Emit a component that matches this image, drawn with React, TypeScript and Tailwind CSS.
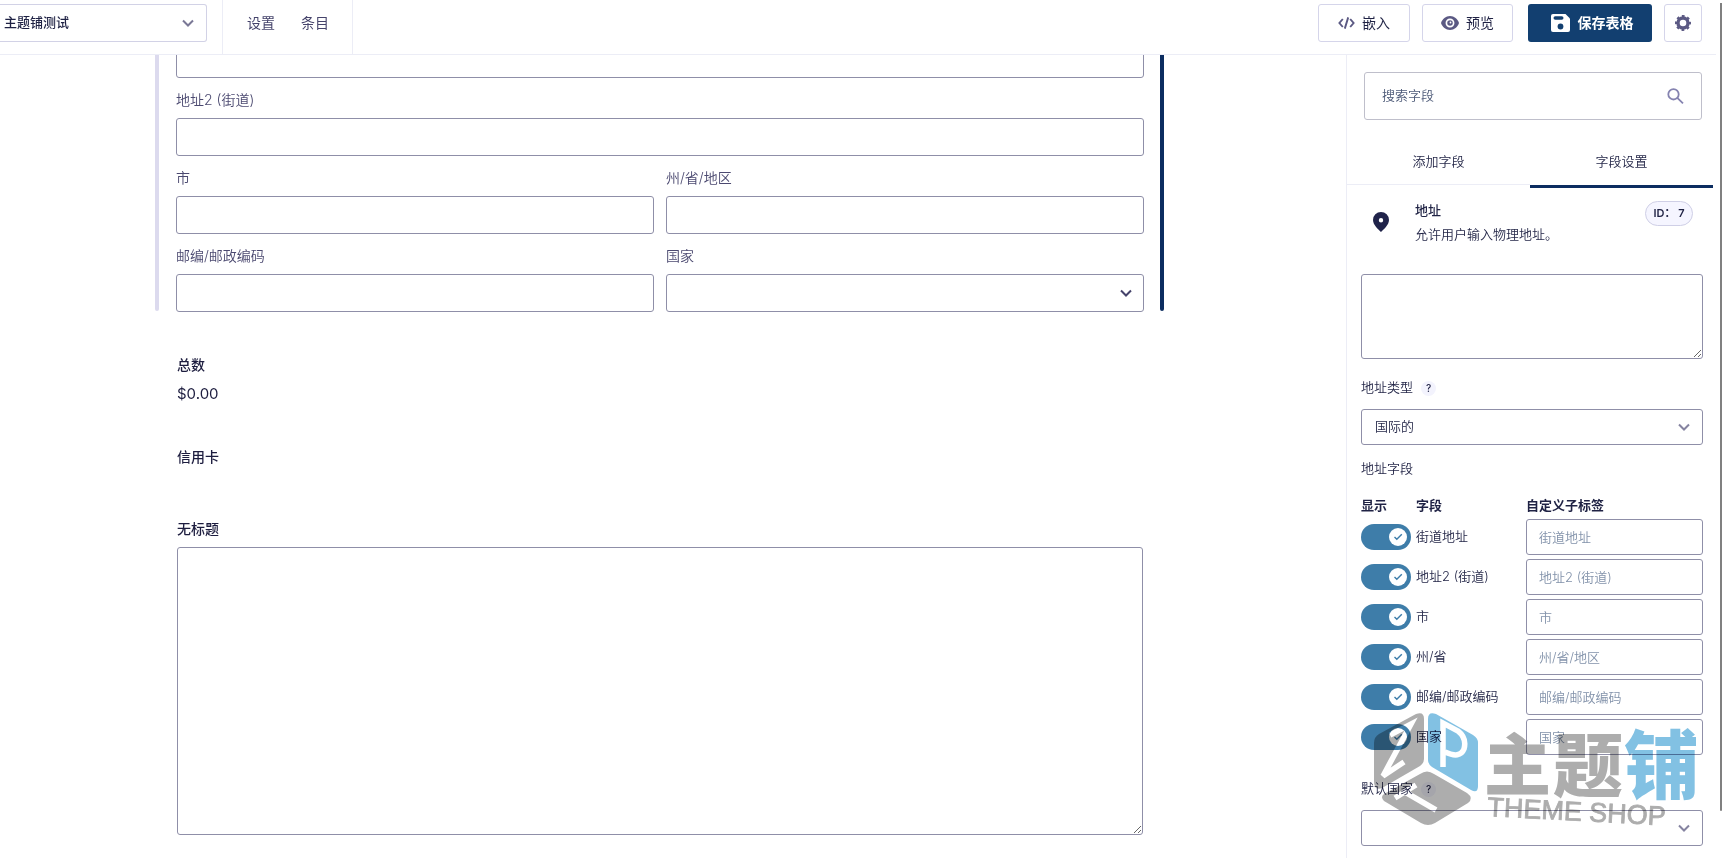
import { useState } from 'react'
import type { ReactNode, SelectHTMLAttributes } from 'react'

interface AddressField {
    id: string
    name: string
    placeholder: string
}

interface SelectBoxProps extends SelectHTMLAttributes<HTMLSelectElement> {
    chevronClass: string
    wrapperClass?: string
}

const ADDRESS_FIELDS: AddressField[] = [
    { id: 'street', name: '街道地址', placeholder: '街道地址' },
    { id: 'street2', name: '地址2 (街道)', placeholder: '地址2 (街道)' },
    { id: 'city', name: '市', placeholder: '市' },
    { id: 'state', name: '州/省', placeholder: '州/省/地区' },
    { id: 'zip', name: '邮编/邮政编码', placeholder: '邮编/邮政编码' },
    { id: 'country', name: '国家', placeholder: '国家' },
]

const controlClass = 'w-full rounded-[3px] border border-[#8f8fa8] bg-white outline-none'

// Native select with its own chevron stacked in the same grid cell
function SelectBox({ chevronClass, wrapperClass = '', className = '', children, ...rest }: SelectBoxProps) {
    return (
        <div className={`grid items-center ${wrapperClass}`}>
            <select
                {...rest}
                className={`col-start-1 row-start-1 w-full appearance-none rounded-[3px] border bg-white outline-none ${className}`}
            >
                {children}
            </select>
            <svg
                className={`pointer-events-none col-start-1 row-start-1 justify-self-end ${chevronClass}`}
                width="12"
                height="8"
                viewBox="0 0 12 8"
                fill="none"
                stroke="currentColor"
                strokeWidth="2"
            >
                <path d="M1 1.5l5 5 5-5" />
            </svg>
        </div>
    )
}

function FormField({ id, label, children }: { id: string; label: string; children?: ReactNode }) {
    return (
        <div>
            <label htmlFor={id} className="flex h-10 items-center pt-1 text-sm font-[350] text-[#4b4970]">
                {label}
            </label>
            {children ?? <input id={id} type="text" className={`block h-[38px] px-3 text-sm ${controlClass}`} />}
        </div>
    )
}

function Toggle({ label }: { label: string }) {
    const [checked, setChecked] = useState(true)

    return (
        <div className="grid w-[50px] items-center">
            <input
                type="checkbox"
                aria-label={label}
                checked={checked}
                onChange={() => setChecked(!checked)}
                className="peer col-start-1 row-start-1 h-[26px] w-[50px] cursor-pointer appearance-none rounded-full bg-[#b5b7cc] checked:bg-[#3e7da9]"
            />
            <span className="pointer-events-none col-start-1 row-start-1 ml-1 flex size-[18px] items-center justify-center rounded-full bg-white peer-checked:ml-[28px]">
                <svg width="10" height="8" viewBox="0 0 10 8" fill="none" stroke="#3e7da9" strokeWidth="1.4">
                    <path d="M1.5 4l2.3 2.3L8.8 1.2" />
                </svg>
            </span>
        </div>
    )
}

function HelpBadge() {
    return (
        <button
            type="button"
            aria-label="帮助"
            className="flex size-[15px] items-center justify-center rounded-full bg-[#f3f3fd] text-[10px] font-medium text-[#1f2244]"
        >
            ?
        </button>
    )
}

function Header() {
    return (
        <header className="mr-[6px] flex h-[55px] shrink-0 border-b border-[#ecedf6]">
            <div className="w-[222px] pt-1">
                <SelectBox
                    aria-label="表单"
                    defaultValue="test"
                    wrapperClass="w-[207px]"
                    className="h-[38px] rounded-l-none border-l-0 border-[#d2d2e6] pr-8 pl-1 text-[13px] font-medium text-[#1f2244]"
                    chevronClass="mr-[13px] text-[#7a7896]"
                >
                    <option value="test">主题铺测试</option>
                </SelectBox>
            </div>
            <nav className="flex w-[131px] gap-[26px] border-x border-[#ecedf6] pt-3 pl-6 text-sm leading-[22px] text-[#45436b]">
                <a href="#settings">设置</a>
                <a href="#entries">条目</a>
            </nav>
            <div className="ml-auto flex items-start gap-3 pt-1 pr-[14px] text-sm text-[#1f2244]">
                <button type="button" className="flex h-[38px] w-[92px] items-center justify-center gap-[7px] rounded-[3px] border border-[#d5d5ea]">
                    <svg width="17" height="12" viewBox="0 0 17 12" fill="none" stroke="#5b5983" strokeWidth="1.9">
                        <path d="M4.8 2L1.4 6l3.4 4M12.2 2l3.4 4-3.4 4M10.2 .4L6.8 11.6" />
                    </svg>
                    嵌入
                </button>
                <button type="button" className="flex h-[38px] w-[91px] items-center justify-center gap-[7px] rounded-[3px] border border-[#d5d5ea]">
                    <svg width="18" height="14" viewBox="0 0 18 14">
                        <path d="M9 0C4.8 0 1.3 2.9 0 7c1.3 4.1 4.8 7 9 7s7.7-2.9 9-7c-1.3-4.1-4.8-7-9-7z" fill="#5b5983" />
                        <circle cx="9" cy="7" r="3.6" fill="none" stroke="#fff" strokeWidth="1.7" />
                        <circle cx="9.5" cy="6.5" r="0.9" fill="#fff" />
                    </svg>
                    预览
                </button>
                <button type="button" className="ml-[3px] flex h-[38px] w-[124px] items-center justify-center gap-2 rounded-[3px] bg-[#123f70] pl-1 font-bold text-white">
                    <svg width="19" height="18" viewBox="0 0 19 18">
                        <path d="M2 0h12.5L19 4.5V16a2 2 0 0 1-2 2H2a2 2 0 0 1-2-2V2a2 2 0 0 1 2-2z" fill="#fff" />
                        <rect x="2.5" y="2.2" width="10" height="3.6" rx="1.8" fill="#123f70" />
                        <circle cx="9.5" cy="12.5" r="2.9" fill="#123f70" />
                    </svg>
                    保存表格
                </button>
                <button type="button" aria-label="选项" className="flex size-[38px] items-center justify-center rounded-[3px] border border-[#d5d5ea]">
                    <svg width="16" height="16" viewBox="0 0 16 16" fill="none" stroke="#5b5983">
                        <circle cx="8" cy="8" r="5" strokeWidth="3.4" />
                        <circle cx="8" cy="8" r="7" strokeWidth="2" strokeDasharray="2.75 2.75" strokeDashoffset="1.37" />
                    </svg>
                </button>
            </div>
        </header>
    )
}

function FormPreview() {
    return (
        <main className="min-w-0 flex-1 overflow-hidden pr-[182px] pl-[155px]">
            {/* Selected address field, scrolled partly under the header */}
            <section className="-mt-[15px] flex h-[271px]">
                <div className="w-1 rounded-b-sm bg-[#dcdaee]" />
                <div className="mr-4 ml-[17px] flex-1">
                    <input type="text" aria-label="街道地址" className={`block h-[38px] px-3 text-sm ${controlClass}`} />
                    <FormField id="street2" label="地址2 (街道)" />
                    <div className="grid grid-cols-2 gap-x-3">
                        <FormField id="city" label="市" />
                        <FormField id="state" label="州/省/地区" />
                        <FormField id="zip" label="邮编/邮政编码" />
                        <FormField id="country" label="国家">
                            <SelectBox
                                id="country"
                                className="h-[38px] border-[#8f8fa8] px-3 text-sm"
                                chevronClass="mr-3 text-[#45436b]"
                            >
                                <option value="" />
                            </SelectBox>
                        </FormField>
                    </div>
                </div>
                <div className="w-1 rounded-b-sm bg-[#0c2d60]" />
            </section>

            <div className="mr-[21px] ml-[22px] text-sm font-medium text-[#1d1d3f]">
                <h3 className="mt-[43px] leading-[22px]">总数</h3>
                <p className="mt-[7px] text-[15px] leading-[22px] font-normal">$0.00</p>
                <h3 className="mt-[41px] leading-[22px]">信用卡</h3>
                <label htmlFor="untitled" className="mt-[50px] block leading-[22px]">无标题</label>
                <textarea id="untitled" className={`mt-[7px] block h-[288px] resize px-3 py-2 ${controlClass}`} />
            </div>
        </main>
    )
}

function FieldSettings() {
    return (
        <div className="pr-[19px] pl-[14px] text-[13px] font-[350] text-[#1f2244]">
            <div className="flex pt-[10px] pr-[10px]">
                <svg className="mt-[14px] ml-3" width="16" height="20" viewBox="0 0 16 20" fill="#20234a">
                    <path fillRule="evenodd" d="M8 0a8 8 0 0 1 8 8c0 5-5.5 9.5-8 12-2.5-2.5-8-7-8-12a8 8 0 0 1 8-8zm0 6a2.2 2.2 0 1 0 0 4.4A2.2 2.2 0 0 0 8 6z" />
                </svg>
                <div className="ml-[26px] flex-1 leading-6">
                    <h2 className="font-medium">地址</h2>
                    <p>允许用户输入物理地址。</p>
                </div>
                <span className="mt-[3px] flex h-[25px] w-12 items-center justify-center rounded-full border border-[#cfcfe6] bg-[#f5f5ff] text-[11px] font-semibold">
                    ID： 7
                </span>
            </div>

            <textarea aria-label="描述" className={`mt-7 block h-[85px] resize px-3 py-2 ${controlClass}`} />

            <div className="mt-[19px] flex h-5 items-center gap-2">
                <label htmlFor="address-type">地址类型</label>
                <HelpBadge />
            </div>
            <SelectBox
                id="address-type"
                defaultValue="international"
                wrapperClass="mt-[11px]"
                className="h-9 border-[#8f8fa8] px-[13px]"
                chevronClass="mr-[13px] text-[#8583a0]"
            >
                <option value="international">国际的</option>
            </SelectBox>

            <h3 className="mt-[13px] leading-5">地址字段</h3>
            <table className="mt-[17px] w-full table-fixed">
                <thead>
                    <tr className="h-[22px] text-left">
                        <th className="w-[55px] p-0 font-bold">显示</th>
                        <th className="p-0 font-bold">字段</th>
                        <th className="w-[177px] p-0 font-bold">自定义子标签</th>
                    </tr>
                </thead>
                <tbody>
                    {ADDRESS_FIELDS.map(field => (
                        <tr key={field.id} className="h-10">
                            <td className="p-0"><Toggle label={field.name} /></td>
                            <td className="p-0">{field.name}</td>
                            <td className="p-0">
                                <input
                                    type="text"
                                    aria-label={`${field.name} 自定义子标签`}
                                    placeholder={field.placeholder}
                                    className={`block h-9 px-3 placeholder:text-[#8292aa] ${controlClass}`}
                                />
                            </td>
                        </tr>
                    ))}
                </tbody>
            </table>

            <div className="mt-[22px] flex h-5 items-center gap-2">
                <label htmlFor="default-country">默认国家</label>
                <HelpBadge />
            </div>
            <SelectBox
                id="default-country"
                wrapperClass="mt-[11px]"
                className="h-9 border-[#8f8fa8] px-[13px]"
                chevronClass="mr-[13px] text-[#8583a0]"
            >
                <option value="" />
            </SelectBox>
        </div>
    )
}

function Sidebar() {
    return (
        <aside className="w-[376px] shrink-0 border-l border-[#ecedf6]">
            <div className="mt-[17px] mr-5 ml-[17px] flex h-12 items-center rounded-[3px] border border-[#bfbfcb] px-[17px]">
                <input
                    type="search"
                    aria-label="搜索字段"
                    placeholder="搜索字段"
                    className="min-w-0 flex-1 text-[13px] font-[350] outline-none placeholder:text-[#4d5a78]"
                />
                <svg width="17" height="16" viewBox="0 0 17 16" fill="none" stroke="#8583b0" strokeWidth="1.8">
                    <circle cx="6.5" cy="6.3" r="5.2" />
                    <path d="M10.3 9.9L16 15.3" />
                </svg>
            </div>
            <div role="tablist" className="mt-[19px] mr-[9px] grid grid-cols-2 items-start text-[13px] font-[350] text-[#1f2244]">
                <button type="button" role="tab" aria-selected={false} className="h-[46px] border-b border-[#ecedf6]">
                    添加字段
                </button>
                <button type="button" role="tab" aria-selected className="h-[49px] border-b-[3px] border-[#0c2d60]">
                    字段设置
                </button>
            </div>
            <FieldSettings />
        </aside>
    )
}

function Watermark() {
    return (
        <svg
            className="pointer-events-none absolute right-[22px] bottom-[28px] mix-blend-multiply"
            width="330"
            height="124"
            viewBox="0 0 330 124"
            fontFamily='"Noto Sans CJK SC", sans-serif'
        >
            <mask id="cube-letters" maskUnits="userSpaceOnUse" x="0" y="0" width="115" height="124">
                <rect width="115" height="124" fill="#fff" />
                <g fill="none" stroke="#000" strokeWidth="5.5">
                    <path d="M73 61V17L88 25Q97 32 94 43Q90 53 75 46" />
                    <path d="M20 29L41 18L13 70L34 56" />
                    <path d="M25 92L46 79M35 86L66 104" />
                </g>
            </mask>
            <g mask="url(#cube-letters)">
                <path d="M4 37Q4 31 9 28L46 8Q54 5 54 13V53Q54 57 50 60L12 82Q4 85 4 75Z" fill="#adadad" />
                <path d="M58 13Q58 5 66 8L103 29Q108 32 108 37V80Q108 88 101 84L62 61Q58 58 58 54Z" fill="#82c1e3" />
                <path d="M50 68Q57 63 64 68L97 87Q104 92 98 97L65 117Q58 121 51 117L14 95Q10 91 14 88Z" fill="#adadad" />
            </g>
            <g fontWeight="900">
                <text x="114" y="84" fontSize="67" fill="#adadad">主</text>
                <text x="183" y="86" fontSize="70" fill="#adadad">题</text>
                <text x="254" y="87" fontSize="75" fill="#82c1e3">铺</text>
            </g>
            <text
                x="117"
                y="110"
                fontSize="27"
                fill="#adadad"
                stroke="#adadad"
                strokeWidth="0.8"
                fontFamily='"Liberation Sans", Arial, sans-serif'
                transform="rotate(3 117 110)"
            >
                THEME SHOP
            </text>
        </svg>
    )
}

export default function App() {
    return (
        <div className="relative flex h-screen flex-col overflow-hidden bg-white font-[Inter,'Noto_Sans_CJK_SC',sans-serif]">
            <Header />
            <div className="flex min-h-0 flex-1">
                <FormPreview />
                <Sidebar />
            </div>
            <Watermark />
            {/* Page scrollbar thumb */}
            <div className="absolute top-[3px] right-0 bottom-[47px] w-0.5 rounded-b-sm bg-[#808080]" />
        </div>
    )
}
